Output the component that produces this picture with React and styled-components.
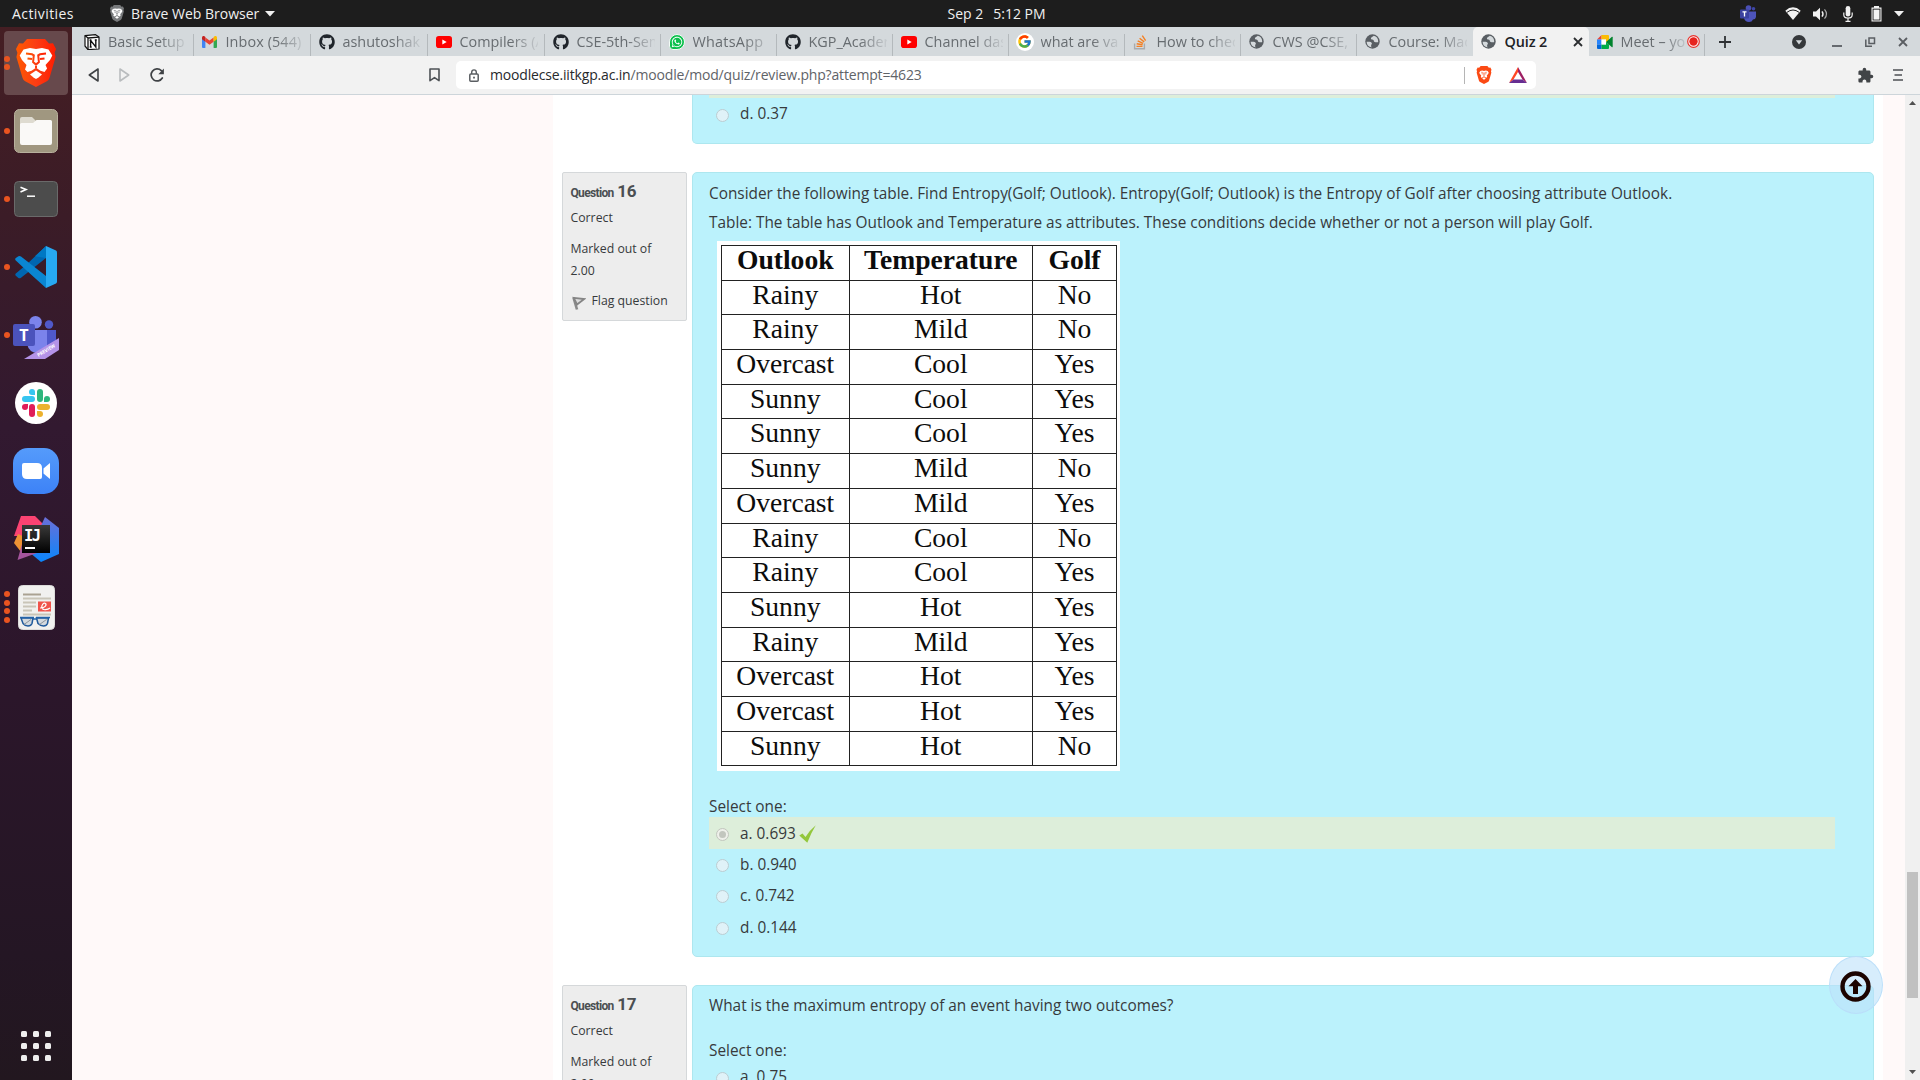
import React from 'react';
import styled, { createGlobalStyle, css } from 'styled-components';
import { FaGithub, FaWhatsapp } from 'react-icons/fa';
import { FcGoogle } from 'react-icons/fc';
import { MdExtension } from 'react-icons/md';

const GlobalStyle = createGlobalStyle`
  * { box-sizing: border-box; }
  body { margin: 0; overflow: hidden; font-family: "Open Sans", "Noto Sans", sans-serif; }
  svg { display: block; flex: none; }
`;

/* ---------- shell ---------- */
const Screen = styled.div`
  width: 1920px;
  height: 1080px;
  display: grid;
  grid-template: 27px 1053px / 72px 1848px;
  overflow: hidden;
`;
const TopBar = styled.header`
  grid-column: 1 / 3;
  display: grid;
  grid-template-columns: 1fr auto 1fr;
  align-items: center;
  background: #1d1d1d;
  color: #f0f0f0;
  font-size: 14px;
  line-height: 26px;
  height: 27px;
  padding: 0 16px 0 12px;
`;
const TopLeft = styled.div`
  display: flex;
  align-items: center;
`;
const Activities = styled.span`
  letter-spacing: 0.42px;
  width: 98px;
`;
const AppName = styled.span`
  margin-left: 7px;
  margin-right: 6px;
`;
const Clock = styled.div`
  white-space: pre;
  display: flex;
  gap: 10px;
  padding-left: 77px;
`;
const Tray = styled.div`
  display: flex;
  justify-content: flex-end;
  align-items: center;
`;
const TrayIcon = styled.span`
  width: ${(p) => p.$w}px;
  margin-left: ${(p) => p.$gap}px;
  display: flex;
`;

/* ---------- dock ---------- */
const Dock = styled.nav`
  background: linear-gradient(#451e23 0%, #3b1c27 18%, #321930 38%, #2c162b 60%, #241624 88%, #22171f 100%);
  display: flex;
  flex-direction: column;
  padding: 2px 0 17px;
`;
const DockSlot = styled.div`
  height: 68px;
  display: grid;
  grid-template-columns: 14px 44px 14px;
  align-items: center;
  justify-items: center;
`;
const ActiveSlot = styled(DockSlot)`
  height: 64px;
  margin: 2px 4px;
  grid-template-columns: 6px 52px 6px;
  border-radius: 4px;
  background: #67494c;
`;
const Dots = styled.div`
  display: flex;
  flex-direction: column;
  gap: 2.7px;
`;
const Dot = styled.i`
  width: 6px;
  height: 6px;
  border-radius: 50%;
  background: #e95420;
`;
const AppGrid = styled.div`
  margin: auto 0 0 21px;
  display: grid;
  grid-template-columns: repeat(3, 6px);
  grid-auto-rows: 6px;
  gap: 6px;
  padding-bottom: 2px;
  height: 32px;
`;
const AppSquare = styled.i`
  background: #eee;
  border-radius: 1.5px;
`;

/* ---------- browser chrome ---------- */
const Browser = styled.main`
  display: grid;
  grid-template-rows: 29px 39px 985px;
  overflow: hidden;
`;
const TabStrip = styled.div`
  background: #d4d9dc;
  display: flex;
  padding-left: 5px;
  align-items: stretch;
`;
const Tab = styled.div`
  width: 116px;
  flex: none;
  display: flex;
  align-items: center;
  padding-left: 6.5px;
  position: relative;
  color: #676c70;
  font-size: 14.4px;
  border-radius: 5px 5px 0 0;
  &:nth-child(-n + 4) { width: 117px; }
  &:first-child { padding-left: 6px; }
  ${(p) => p.$active && css`
    background: #f2f2f2;
    color: #202124;
  `}
`;
const TabSeparator = styled.i`
  position: absolute;
  right: 0;
  top: 7px;
  bottom: 0;
  width: 1px;
  background: #b4b9bc;
`;
const Favicon = styled.span`
  width: 18px;
  height: 18px;
  display: flex;
  align-items: center;
  justify-content: center;
`;
const TabTitle = styled.span`
  width: ${(p) => p.$w || 78}px;
  margin-left: 7px;
  overflow: hidden;
  white-space: nowrap;
  line-height: 28px;
  padding-top: 1px;
  letter-spacing: ${(p) => p.$ls || 0}px;
  font-weight: ${(p) => (p.$bold ? 600 : 400)};
  ${(p) => !p.$bold && css`
    mask-image: linear-gradient(90deg, #000 65%, transparent 104%);
  `}
`;
const WindowButtons = styled.div`
  flex: 1;
  display: flex;
  align-items: center;
  justify-content: space-between;
  padding: 0 12.5px 0 14px;
`;
const WindowGroup = styled.div`
  display: flex;
  gap: 15px;
  align-items: center;
`;
const Toolbar = styled.div`
  background: #f2f2f2;
  border-bottom: 1px solid #cdd5da;
  display: flex;
  align-items: center;
  padding: 0 17px 0 16px;
`;
const NavButtons = styled.div`
  display: flex;
  align-items: center;
  gap: 20px;
  width: 341px;
`;
const BookmarkSlot = styled.div`
  width: 27px;
`;
const UrlBar = styled.div`
  width: 1080px;
  height: 28px;
  background: #fff;
  border-radius: 5px;
  display: flex;
  align-items: center;
  padding: 0 9px 0 13px;
`;
const UrlText = styled.span`
  margin-left: 11px;
  flex: 1;
  font-size: 14px;
  letter-spacing: -0.17px;
  line-height: 28px;
  color: #5f6368;
`;
const UrlHost = styled.span`
  color: #27292c;
`;
const UrlDivider = styled.i`
  width: 1px;
  height: 17px;
  background: #b5b5b5;
  margin-right: 11px;
`;
const ShieldSlot = styled.span`
  margin-right: 17px;
`;
const ToolbarEnd = styled.div`
  margin-left: auto;
  display: flex;
  align-items: center;
  gap: 19px;
  color: #414447;
`;

/* ---------- page ---------- */
const Viewport = styled.div`
  display: grid;
  grid-template-columns: 481px 1330px 22px 15px;
  background: #fff9f9;
  height: 985px;
  overflow: hidden;
  position: relative;
`;
const Content = styled.section`
  grid-column: 2;
  background: #fff;
  padding: 0 9px;
  height: 985px;
  overflow: hidden;
  color: #373a3c;
`;
const Question = styled.article`
  display: grid;
  grid-template-columns: 125px 1182px;
  column-gap: 5px;
  align-items: start;
  margin-bottom: 28px;
`;
const Info = styled.aside`
  background: #ededed;
  border: 1px solid #d5d8da;
  border-radius: 2px;
  padding: 5.5px 7.5px 0;
  height: 149px;
  font-size: 12.28px;
  line-height: 22px;
`;
const QuestionNo = styled.h3`
  margin: 0;
  height: 24px;
  font: 700 12px/24px Roboto, sans-serif;
  letter-spacing: -0.65px;
  color: #4b4f52;
  display: flex;
  align-items: baseline;
  gap: 3.5px;
`;
const Num = styled.span`
  font-size: 17px;
  letter-spacing: -0.3px;
`;
const InfoLine = styled.div`
  margin-top: ${(p) => p.$mt}px;
  display: flex;
  align-items: center;
`;
const FlagSlot = styled.span`
  width: 21px;
  padding: 5px 0 0 1px;
`;
const Panel = styled.div`
  grid-column: 2;
  background: #bbf2fc;
  border: 1px solid #ade7ef;
  border-radius: 5px;
  padding: 0 38px 0 16px;
  font-size: 15.37px;
  height: ${(p) => p.$h}px;
  border-top-width: ${(p) => (p.$cut ? 0 : 1)}px;
  border-top-left-radius: ${(p) => (p.$cut ? 0 : 5)}px;
  border-top-right-radius: ${(p) => (p.$cut ? 0 : 5)}px;
`;
const Prompt = styled.p`
  margin: ${(p) => p.$mt}px 0 0;
  line-height: 23px;
  height: 23px;
  white-space: nowrap;
`;
const CutStrip = styled.div`
  height: 3px;
  background: #ddeeda;
`;
const Answers = styled.div`
  display: grid;
  grid-auto-rows: 31.4px;
  margin-top: ${(p) => p.$mt || 0}px;
`;
const Answer = styled.div`
  display: flex;
  align-items: center;
  padding: 0 0 0 7px;
`;
const RightAnswer = styled(Answer)`
  background: #ddeeda;
  height: 32px;
`;
const Radio = styled.span`
  width: 13px;
  height: 13px;
  border-radius: 50%;
  border: 1px solid #bccdd2;
  background: #e0f2f8;
  margin: 3px 11px 0 0;
  display: grid;
  place-items: center;
  ${(p) => p.$on && css`
    background: #eef0ea;
    border-color: #c2c6be;
    &::after {
      content: '';
      width: 7px;
      height: 7px;
      border-radius: 50%;
      background: #c2c6be;
    }
  `}
`;
const AnswerText = styled.span`
  line-height: 24px;
  margin-top: 1.5px;
`;
const TickSlot = styled.span`
  margin: 2px 0 0 3.5px;
`;
const TableFrame = styled.div`
  margin: 7px 0 0 8px;
  width: 403px;
  height: 530px;
  background: #fff;
  padding: 4px 3px 4px 4px;
`;
const DataTable = styled.div`
  display: grid;
  grid-template-columns: 127.5px 183.5px 84px;
  grid-template-rows: repeat(15, 34.7px);
  border-top: 1px solid #222;
  border-left: 1px solid #222;
  width: 396px;
  font-family: "Liberation Serif", "Times New Roman", serif;
  font-size: 27.6px;
  color: #0c0c0c;
`;
const Cell = styled.div`
  border-right: 1px solid #222;
  border-bottom: 1px solid #222;
  text-align: center;
  line-height: 28px;
  font-weight: ${(p) => (p.$head ? 700 : 400)};
`;
const ToTop = styled.div`
  position: absolute;
  left: 1756.5px;
  top: 861px;
  width: 54px;
  height: 58px;
  border-radius: 50%;
  border: 1px solid rgba(185, 222, 250, 0.9);
  background: rgba(188, 225, 250, 0.6);
  display: grid;
  place-items: center;
  padding-top: 2px;
`;
const Scrollbar = styled.div`
  grid-column: 4;
  background: #f0f0f0;
  display: grid;
  grid-template-rows: 777px 126px 1fr;
  justify-items: center;
`;
const Thumb = styled.div`
  width: 11px;
  background: #c1c1c1;
`;
const ArrowSlot = styled.span`
  padding-top: ${(p) => p.$pt}px;
`;

/* ---------- icons ---------- */
const Caret = () => (
  <svg width="10" height="6" viewBox="0 0 10 6"><path d="M0 0h10L5 5.6z" fill="#f0f0f0" /></svg>
);
const Notion = () => (
  <svg width="16" height="16" viewBox="0 0 16 16">
    <path d="M1 1.6 11.6.7 15 3v12L4 15.6 1 12z" fill="#fff" stroke="#111" strokeWidth="1.2" strokeLinejoin="round" />
    <path d="M1 1.6 4 4v11.6M4 4l11-.8" stroke="#111" strokeWidth="1.3" fill="none" />
    <path d="M6.6 13V6.4L11.8 13V6M5.6 6.3h2M10.8 6h2M5.7 13h2" stroke="#111" strokeWidth="1.4" fill="none" />
  </svg>
);
const Gmail = () => (
  <svg width="15" height="12" viewBox="0 0 15 12">
    <path d="M0 2v9a1 1 0 0 0 1 1h2.4V4.5z" fill="#4285f4" />
    <path d="M15 2v9a1 1 0 0 1-1 1h-2.4V4.5z" fill="#34a853" />
    <path d="M3.4 1.4 7.5 4.5l4.1-3.1v4.3L7.5 8.8 3.4 5.7z" fill="#ea4335" />
    <path d="M0 1.7C0 .2 1.6-.4 2.7.5l.7.6v4.6L0 3.2z" fill="#c5221f" />
    <path d="M15 1.7C15 .2 13.4-.4 12.3.5l-.7.6v4.6L15 3.2z" fill="#fbbc04" />
  </svg>
);
const YouTube = () => (
  <svg width="16" height="12" viewBox="0 0 16 12">
    <rect width="16" height="12" rx="2.8" fill="#f00" /><path d="M6.3 3.4v5.2L10.7 6z" fill="#fff" />
  </svg>
);
const WhatsAppIcon = styled.span`
  width: 16px;
  height: 16px;
  border-radius: 50% 50% 50% 25%;
  background: #0bbf4c;
  border: 1px solid #f4fbf6;
  color: #fff;
  display: grid;
  place-items: center;
`;
const GoogleDisc = styled.span`
  width: 18px;
  height: 18px;
  border-radius: 50%;
  background: #fff;
  display: grid;
  place-items: center;
`;
const StackOverflow = () => (
  <svg width="15" height="16" viewBox="0 0 15 16" fill="none">
    <path d="M1.6 9.5v5.2h9.8V9.5" stroke="#a9abad" strokeWidth="1.4" />
    <path d="M3.5 12.4h6M3.7 9.7l5.9 1.1M4.7 6.9l5.4 2.5M6.6 4.2l4.6 3.7M9.3 1.7l3.3 4.9" stroke="#f48024" strokeWidth="1.4" />
  </svg>
);
const Globe = () => (
  <svg width="15" height="15" viewBox="0 0 15 15">
    <circle cx="7.5" cy="7.5" r="7.2" fill="#595e63" />
    <path d="M8.8 1.7C7.7 3.2 5.9 2.8 5.9 4.6c0 1.6 3 .6 3 2.5 0 1.1 1.1 1.3 2.6 1.1 1.2-.2 1.8.1 1.700-.8A5.900 5.900 0 0 0 8.800 1.700zM1.600 7.800c2 .3 4.100-.3 5 .9.900 1.100-.4 1.500-.5 2.700 0 .9.300 1.700.9 2A5.900 5.900 0 0 1 1.600 7.800z" fill="#d4d9dc" />
  </svg>
);
const Meet = () => (
  <svg width="16" height="14" viewBox="0 0 16 14">
    <path d="M0 4.500 4.500 0v4.500z" fill="#ea4335" />
    <path d="M4.500 0H11a1 1 0 0 1 1 1v4.500L9 7V4.500H4.500z" fill="#fbbc04" />
    <path d="M0 4.500h4.500v5H0z" fill="#2684fc" /><path d="M0 9.500h4.500V14H1a1 1 0 0 1-1-1z" fill="#0066da" />
    <path d="M4.500 9.500H9V7l3 2.500V13a1 1 0 0 1-1 1H4.500z" fill="#00ac47" />
    <path d="M4.500 4.500H9v5H4.500z" fill="#fff" /><path d="M9 7l6-5.200c.4-.3.7 0 .7.4v9.600c0 .4-.3.7-.7.4z" fill="#00832d" />
  </svg>
);
const RecordDot = () => (
  <svg width="13" height="13" viewBox="0 0 13 13"><circle cx="6.5" cy="6.5" r="5.8" fill="#fff" stroke="#e8322c" strokeWidth="1.2" /><circle cx="6.5" cy="6.5" r="4.2" fill="#e6241f" /></svg>
);
const Cross = ({ color = '#2b2d30' }) => (
  <svg width="10" height="10" viewBox="0 0 10 10"><path d="M1 1l8 8M9 1L1 9" stroke={color} strokeWidth="1.8" /></svg>
);
const Shield = ({ w, h, body, face = 1 }) => (
  <svg width={w} height={h} viewBox="0 0 40 48">
    <defs><linearGradient id="lion"><stop offset="0" stopColor="#ff5a00" /><stop offset=".5" stopColor="#fb3d14" /><stop offset="1" stopColor="#ff1c00" /></linearGradient></defs>
    <path d="M11 0h18l4 4.500 4-.3 3 5.800-1.400 3.800 1 4.200-6 20.500c-.6 2-1.600 3-3.200 4L20 48l-10.400-5.500c-1.600-1-2.600-2-3.200-4L.4 18l1-4.200L0 10l3-5.800 4 .3z" fill={body} />
    <g transform={`translate(20 24) scale(${face}) translate(-20 -24)`}>
      <path d="M7.500 10.500 14 9l6 1 6-1 6.500 1.500 3.800 6-2.300 4.500-4.500 5 1.600 3.500-2.600 3.500-4-1.300-4.500-3-4.500 3-4 1.300L9 30.500 10.500 26 6 21l-2.300-4.500z" fill="#fff" />
      <path d="M10 14.500l6 .8 1.800 1-.7 6.700 2.900 2.600 2.900-2.600-.7-6.700 1.800-1 6-.8M11.500 19.500l4.500.6M28.500 19.500l-4.500.6M20 25v4" stroke={body} strokeWidth="2" fill="none" />
      <path d="M20 31.500l6 4-3.500 3L20 40l-2.500-1.500-3.500-3z" fill="#fff" />
    </g>
  </svg>
);
const Files = () => (
  <svg width="44" height="44" viewBox="0 0 44 44">
    <rect x=".5" y=".5" width="43" height="43" rx="5" fill="#a09780" stroke="#b8b09d" />
    <path d="M6 13V10q0-2 2-2h10l4 4v4H6z" fill="#dedbd0" />
    <path d="M6 15.500q0-1.500 1.500-1.500H19l3.500-3H36.500Q38 11 38 12.500V34q0 2-2 2H8q-2 0-2-2z" fill="#faf9f7" />
  </svg>
);
const Terminal = () => (
  <svg width="44" height="36" viewBox="0 0 44 36">
    <rect x=".5" y=".5" width="43" height="35" rx="4" fill="#4c4c4c" stroke="#6a6a6a" />
    <path d="M6.500 6.300l5.500 2.200-5.500 2.400" stroke="#fff" strokeWidth="1.6" fill="none" /><path d="M13 15.200h8" stroke="#fff" strokeWidth="1.5" />
  </svg>
);
const VSCode = () => (
  <svg width="42" height="42" viewBox="0 0 42 42">
    <path d="M31 0 11 19 .8 27.500Q-.2 28.700.8 29.700L3.400 32Q4.600 32.800 6 31.700L31 12z" fill="#0066b0" />
    <path d="M31 42 11 24 .8 14.500Q-.4 13 .8 12L3.400 10.300Q4.600 9.500 6 10.400L31 30z" fill="#0a86d2" />
    <path d="M31 0 20 10.300 31 12z" fill="#0078c4" />
    <path d="M31 0 41 4.500Q42 5 42 6.500v29Q42 37 41 37.500L31 42z" fill="#27a9f2" />
  </svg>
);
const IconText = styled.text`
  font-family: ${(p) => p.$font || '"Open Sans"'}, sans-serif;
  font-weight: 700;
  font-size: ${(p) => p.$s}px;
`;
const TeamsSlot = styled.span`
  padding-top: 5px;
`;
const Teams = () => (
  <TeamsSlot>
    <svg width="46" height="43" viewBox="0 0 46 43">
      <circle cx="22.5" cy="6.3" r="6.3" fill="#7b83eb" /><circle cx="36" cy="8.5" r="4.2" fill="#5059c9" />
      <path d="M32 14h11v17q0 4-4 4h-7z" fill="#4f58ca" /><path d="M14 14h20v17q-3 6-9 6-9 0-11-9z" fill="#7b83eb" />
      <rect y="8" width="22" height="22" rx="2" fill="#4b53bc" />
      <IconText x="11" y="25" $s="16" textAnchor="middle" fill="#fff">T</IconText>
      <path d="M11 43 46 22v12L32 43z" fill="#b493e8" />
      <IconText x="25.5" y="41" $s="5" fill="#fff" textLength="20" lengthAdjust="spacingAndGlyphs" transform="rotate(-31 25.5 41)">PREVIEW</IconText>
    </svg>
  </TeamsSlot>
);
const Slack = () => (
  <svg width="42" height="42" viewBox="0 0 42 42">
    <circle cx="21" cy="21" r="21" fill="#fff" />
    <g fill="#36c5f0"><rect x="7" y="14" width="13" height="6" rx="3" /><path d="M20 13h-3a3 3 0 1 1 3-3z" /></g>
    <g fill="#2eb67d"><rect x="22" y="7" width="6" height="13" rx="3" /><path d="M29 20v-3a3 3 0 1 1 3 3z" /></g>
    <g fill="#ecb22e"><rect x="22" y="22" width="13" height="6" rx="3" /><path d="M22 29h3a3 3 0 1 1-3 3z" /></g>
    <g fill="#e01e5a"><rect x="14" y="22" width="6" height="13" rx="3" /><path d="M13 22v3a3 3 0 1 1-3-3z" /></g>
  </svg>
);
const Zoom = () => (
  <svg width="46" height="46" viewBox="0 0 46 46">
    <defs><linearGradient id="zm" x2="0" y2="1"><stop stopColor="#559bfb" /><stop offset="1" stopColor="#3d82f7" /></linearGradient></defs>
    <rect width="46" height="46" rx="15" fill="url(#zm)" />
    <path d="M9 17q0-2 2-2h13q5 0 5 5v9q0 2-2 2H14q-5 0-5-5z" fill="#fff" /><path d="M30.500 20.500 37 15v16l-6.500-5.500z" fill="#fff" />
  </svg>
);
const IntelliJ = () => (
  <svg width="46" height="46" viewBox="0 0 46 46">
    <defs>
      <linearGradient id="ijb" x2="0" y2="1"><stop stopColor="#6b6fd8" /><stop offset="1" stopColor="#0a86fb" /></linearGradient>
      <linearGradient id="ijk" x2="0" y2="1"><stop stopColor="#3a3a3a" /><stop offset="1" stopColor="#000" /></linearGradient>
    </defs>
    <path d="M8 0h14l8 8-8 12H1z" fill="#fb4372" /><path d="M32 1 46 12v26L28 46 16 36z" fill="url(#ijb)" />
    <path d="M5 18 1 27l7 9 6-14z" fill="#ee9234" /><path d="M9 28 4.500 44 24 37z" fill="#a4549c" />
    <rect x="9" y="9" width="28" height="28" fill="url(#ijk)" />
    <IconText x="11" y="25" $s="15.5" $font='"DejaVu Sans Mono"' textLength="17" fill="#fff">IJ</IconText>
    <rect x="12" y="31" width="10" height="2" fill="#fff" />
  </svg>
);
const Evince = () => (
  <svg width="37" height="45" viewBox="0 0 37 45">
    <rect x=".5" y=".5" width="36" height="44" rx="4" fill="#f1f1ef" stroke="#dcdcda" />
    <path d="M5 9.500h18" stroke="#aaa292" strokeWidth="2" />
    <path d="M5 13.500h28M5 17.500h13M5 21.500h13M5 25.500h9M5 29.500h28" stroke="#c9c5b8" strokeWidth="2" />
    <rect x="20" y="16.5" width="13" height="10" fill="#f0544c" />
    <path d="M22 23c5 0 7-3 5.500-4.500S23 20 24 23s6 1.500 8 0" stroke="#fff" strokeWidth="1.2" fill="none" />
    <g fill="#d3d9de" stroke="#1f5a9c" strokeWidth="1.5"><path d="M3 33h12L14 38.500q-1 2.500-4 2.500T5 38.500zM18.500 33h12L29.500 38.500q-1 2.500-4 2.500T20 38.500z" /></g>
    <path d="M2 32.500h14M18 32.500h14M15 34h4" stroke="#2463a8" strokeWidth="1.6" />
    <path d="M6 39.500l7-5M21.500 39.500l7-5" stroke="#8a949c" strokeWidth="1" />
  </svg>
);
const TeamsTray = () => (
  <svg width="17" height="17" viewBox="0 0 17 17">
    <circle cx="8.5" cy="3" r="2.8" fill="#4a4fb5" /><circle cx="13.5" cy="3.7" r="1.8" fill="#3f46a8" />
    <path d="M7 6.500h9V12q-.5 2.500-3 2.500Q12 17 9 17q-4 0-5-4z" fill="#4d54bb" />
    <rect y="4.5" width="9" height="9" rx="1" fill="#3b429f" /><path d="M2.500 6.900h4M4.500 7v4.500" stroke="#fff" strokeWidth="1.3" />
  </svg>
);
const Wifi = () => (
  <svg width="16" height="13" viewBox="0 0 16 13"><path d="M.3 3.700Q8-3 15.700 3.700L8 13z" fill="#f2f2f2" /><path d="M2 5.300q6-4.600 12 0" stroke="#1d1d1d" strokeWidth="1" fill="none" /></svg>
);
const Volume = () => (
  <svg width="16" height="14" viewBox="0 0 16 14"><path d="M0 4.500h3L7 .8v12.400L3 9.500H0z" fill="#f2f2f2" /><path d="M9 4.300q2 2.700 0 5.400" stroke="#f2f2f2" strokeWidth="1.4" fill="none" /><path d="M11.500 2.300q4 4.700 0 9.400" stroke="#a9a9a9" strokeWidth="1.2" fill="none" /></svg>
);
const Mic = () => (
  <svg width="10" height="16" viewBox="0 0 10 16"><rect x="2.7" width="4.6" height="10.5" rx="2.3" fill="#f2f2f2" /><path d="M.8 6.500v2.200Q.8 12 5 12t4.200-3.300V6.500M5 12v3.300M2.500 15.300h5" stroke="#f2f2f2" strokeWidth="1.2" fill="none" /></svg>
);
const Battery = () => (
  <svg width="11" height="16" viewBox="0 0 11 16"><path d="M3 0h5v1.500h2.500V15.500H.5V1.500H3z" fill="#f2f2f2" /><rect x="1.6" y="2.7" width="7.8" height="11.7" fill="#1d1d1d" /><rect x="2.5" y="3.6" width="6" height="10" fill="#f2f2f2" /></svg>
);
const Triangle = ({ dir, color }) => (
  <svg width="11" height="14" viewBox="0 0 11 14">
    <path d={dir === 'left' ? 'M10 1v12L1.300 7z' : 'M1 1v12l8.700-6z'} fill="none" stroke={color} strokeWidth="1.6" strokeLinejoin="round" />
  </svg>
);
const Reload = () => (
  <svg width="15" height="14" viewBox="0 0 15 14"><path d="M12.300 10A6 6 0 1 1 11.300 2.600" fill="none" stroke="#3f4245" strokeWidth="1.7" strokeLinecap="round" /><path d="M13.900.5v5.700H8.300z" fill="#3f4245" /></svg>
);
const Bookmark = () => (
  <svg width="11" height="14" viewBox="0 0 11 14"><path d="M1 1h9v11.700L5.500 9.600 1 12.700z" fill="none" stroke="#4d5155" strokeWidth="1.6" strokeLinejoin="round" /></svg>
);
const Lock = () => (
  <svg width="10" height="13" viewBox="0 0 10 13"><rect x=".8" y="5" width="8.4" height="7.2" rx="1" fill="none" stroke="#5a5e62" strokeWidth="1.5" /><path d="M2.700 5V3.200a2.300 2.300 0 0 1 4.600 0V5" fill="none" stroke="#5a5e62" strokeWidth="1.4" /><rect x="4.1" y="7.7" width="1.8" height="1.8" fill="#5a5e62" /></svg>
);
const Bat = () => (
  <svg width="18" height="16" viewBox="0 0 18 16"><path d="M9 0v5L4.500 12.600 0 16z" fill="#ff4724" /><path d="M9 0l9 16-4.500-3.400L9 5z" fill="#9e1f63" /><path d="M0 16l4.500-3.400h9L18 16z" fill="#662d91" /></svg>
);
const Menu = () => (
  <svg width="10" height="12" viewBox="0 0 10 12"><path d="M0 1h10M1.500 6H9M0 11h10" stroke="#4d5054" strokeWidth="1.7" /></svg>
);
const Flag = () => (
  <svg width="14" height="14" viewBox="0 0 14 14"><path d="M1.500 1.500 5 13.500" stroke="#8a8a8a" strokeWidth="2.6" /><path d="M1.800 1.800 12.300 3 5 8.500z" fill="#ddd" stroke="#858585" strokeWidth="1.8" /></svg>
);
const Tick = () => (
  <svg width="18" height="18" viewBox="0 0 18 18"><path d="M.3 10.500 3.500 8.500 6.500 12Q11 5 16.800.3 12 8 8.300 17.700z" fill="#93c73c" /></svg>
);
const UpArrow = () => (
  <svg width="31" height="31" viewBox="0 0 31 31"><circle cx="15.5" cy="15.5" r="13" fill="none" stroke="#1c0400" strokeWidth="4.4" /><path d="M15.500 8 22.500 15.300H18V23H13V15.300H8.500z" fill="#1c0400" /></svg>
);

const tabs = [
  [<Notion />, 'Basic Setup', -0.05],
  [<Gmail />, 'Inbox (544)', 0.1],
  [<FaGithub size={16} color="#20252b" />, 'ashutoshak'],
  [<YouTube />, 'Compilers (A'],
  [<FaGithub size={16} color="#20252b" />, 'CSE-5th-Sem'],
  [<WhatsAppIcon><FaWhatsapp size={12} /></WhatsAppIcon>, 'WhatsApp', 0.25],
  [<FaGithub size={16} color="#20252b" />, 'KGP_Acader'],
  [<YouTube />, 'Channel das'],
  [<GoogleDisc><FcGoogle size={15} /></GoogleDisc>, 'what are va'],
  [<StackOverflow />, 'How to chec'],
  [<Globe />, 'CWS @CSE,'],
  [<Globe />, 'Course: Mac'],
];
const dock = [
  [1, Files], [1, Terminal], [1, VSCode], [1, Teams], [0, Slack], [0, Zoom], [0, IntelliJ], [4, Evince],
];
const rows = [
  ['Rainy', 'Hot', 'No'], ['Rainy', 'Mild', 'No'], ['Overcast', 'Cool', 'Yes'], ['Sunny', 'Cool', 'Yes'],
  ['Sunny', 'Cool', 'Yes'], ['Sunny', 'Mild', 'No'], ['Overcast', 'Mild', 'Yes'], ['Rainy', 'Cool', 'No'],
  ['Rainy', 'Cool', 'Yes'], ['Sunny', 'Hot', 'Yes'], ['Rainy', 'Mild', 'Yes'], ['Overcast', 'Hot', 'Yes'],
  ['Overcast', 'Hot', 'Yes'], ['Sunny', 'Hot', 'No'],
];

const DotColumn = ({ n }) => <Dots>{Array.from({ length: n }, (_, i) => <Dot key={i} />)}</Dots>;

const QuestionInfo = ({ n }) => (
  <Info>
    <QuestionNo>Question <Num>{n}</Num></QuestionNo>
    <InfoLine $mt={4}>Correct</InfoLine>
    <InfoLine $mt={9}>Marked out of</InfoLine>
    <InfoLine $mt={0}>2.00</InfoLine>
    <InfoLine $mt={8}><FlagSlot><Flag /></FlagSlot>Flag question</InfoLine>
  </Info>
);

export default function App() {
  return (
    <Screen>
      <GlobalStyle />
      <TopBar>
        <TopLeft>
          <Activities>Activities</Activities>
          <Shield w={14} h={17} body="#77797b" face={0.95} />
          <AppName>Brave Web Browser</AppName>
          <Caret />
        </TopLeft>
        <Clock><span>Sep 2</span><span>5:12 PM</span></Clock>
        <Tray>
          <TrayIcon $w={17} $gap={0}><TeamsTray /></TrayIcon>
          <TrayIcon $w={16} $gap={28}><Wifi /></TrayIcon>
          <TrayIcon $w={16} $gap={12}><Volume /></TrayIcon>
          <TrayIcon $w={10} $gap={14}><Mic /></TrayIcon>
          <TrayIcon $w={11} $gap={18}><Battery /></TrayIcon>
          <TrayIcon $w={10} $gap={12}><Caret /></TrayIcon>
        </Tray>
      </TopBar>

      <Dock>
        <ActiveSlot><DotColumn n={2} /><Shield w={40} h={48} body="url(#lion)" /></ActiveSlot>
        {dock.map(([n, Icon], i) => (
          <DockSlot key={i}><DotColumn n={n} /><Icon /></DockSlot>
        ))}
        <AppGrid>{Array.from({ length: 9 }, (_, i) => <AppSquare key={i} />)}</AppGrid>
      </Dock>

      <Browser>
        <TabStrip>
          {tabs.map(([icon, title, ls], i) => (
            <Tab key={i}>
              <Favicon>{icon}</Favicon>
              <TabTitle $ls={ls}>{title}</TabTitle>
              {i < 11 && <TabSeparator />}
            </Tab>
          ))}
          <Tab $active>
            <Favicon><Globe /></Favicon>
            <TabTitle $bold $w={68} $ls={-0.1}>Quiz 2</TabTitle>
            <Cross />
          </Tab>
          <Tab>
            <Favicon><Meet /></Favicon>
            <TabTitle $w={66}>Meet – yo</TabTitle>
            <RecordDot />
            <TabSeparator />
          </Tab>
          <WindowButtons>
            <svg width="12" height="12" viewBox="0 0 12 12"><path d="M6 0v12M0 6h12" stroke="#2f3235" strokeWidth="1.8" /></svg>
            <WindowGroup>
              <svg width="25" height="14" viewBox="0 0 25 14"><circle cx="7" cy="7" r="7" fill="#35383b" /><path d="M3.800 5.200h6.400L7 9.500z" fill="#d4d9dc" /></svg>
              <svg width="18" height="14" viewBox="0 0 18 14"><path d="M0 11h10" stroke="#5a5e62" strokeWidth="1.8" /></svg>
              <svg width="18" height="10" viewBox="0 0 18 10"><path d="M4 1h5.500v5.500H4z" fill="none" stroke="#5a5e62" strokeWidth="1.5" /><path d="M.8 2.500V9.200H7" fill="none" stroke="#5a5e62" strokeWidth="1.5" /></svg>
              <Cross color="#5a5e62" />
            </WindowGroup>
          </WindowButtons>
        </TabStrip>

        <Toolbar>
          <NavButtons>
            <Triangle dir="left" color="#3f4245" />
            <Triangle dir="right" color="#b9bcbe" />
            <Reload />
          </NavButtons>
          <BookmarkSlot><Bookmark /></BookmarkSlot>
          <UrlBar>
            <Lock />
            <UrlText><UrlHost>moodlecse.iitkgp.ac.in</UrlHost>/moodle/mod/quiz/review.php?attempt=4623</UrlText>
            <UrlDivider />
            <ShieldSlot><Shield w={16} h={18} body="#fb4a14" face={0.78} /></ShieldSlot>
            <Bat />
          </UrlBar>
          <ToolbarEnd><MdExtension size={17} /><Menu /></ToolbarEnd>
        </Toolbar>

        <Viewport>
          <Content>
            <Question>
              <Panel $h={49} $cut>
                <CutStrip />
                <Answers><Answer><Radio /><AnswerText>d. 0.37</AnswerText></Answer></Answers>
              </Panel>
            </Question>
            <Question>
              <QuestionInfo n="16" />
              <Panel $h={785}>
                <Prompt $mt={9}>Consider the following table. Find Entropy(Golf; Outlook). Entropy(Golf; Outlook) is the Entropy of Golf after choosing attribute Outlook.</Prompt>
                <Prompt $mt={6}>Table: The table has Outlook and Temperature as attributes. These conditions decide whether or not a person will play Golf.</Prompt>
                <TableFrame>
                  <DataTable>
                    {['Outlook', 'Temperature', 'Golf'].map((t) => <Cell $head key={t}>{t}</Cell>)}
                    {rows.flat().map((t, i) => <Cell key={i}>{t}</Cell>)}
                  </DataTable>
                </TableFrame>
                <Prompt $mt={24}>Select one:</Prompt>
                <Answers $mt={-1}>
                  <RightAnswer><Radio $on /><AnswerText>a. 0.693</AnswerText><TickSlot><Tick /></TickSlot></RightAnswer>
                  <Answer><Radio /><AnswerText>b. 0.940</AnswerText></Answer>
                  <Answer><Radio /><AnswerText>c. 0.742</AnswerText></Answer>
                  <Answer><Radio /><AnswerText>d. 0.144</AnswerText></Answer>
                </Answers>
              </Panel>
            </Question>
            <Question>
              <QuestionInfo n="17" />
              <Panel $h={400}>
                <Prompt $mt={8}>What is the maximum entropy of an event having two outcomes?</Prompt>
                <Prompt $mt={22}>Select one:</Prompt>
                <Answers $mt={-1}><Answer><Radio /><AnswerText>a. 0.75</AnswerText></Answer></Answers>
              </Panel>
            </Question>
          </Content>
          <Scrollbar>
            <ArrowSlot $pt={6}><svg width="7" height="4" viewBox="0 0 7 4"><path d="M0 4h7L3.500 0z" fill="#505050" /></svg></ArrowSlot>
            <Thumb />
            <ArrowSlot $pt={72}><svg width="7" height="4" viewBox="0 0 7 4"><path d="M0 0h7L3.500 4z" fill="#505050" /></svg></ArrowSlot>
          </Scrollbar>
          <ToTop><UpArrow /></ToTop>
        </Viewport>
      </Browser>
    </Screen>
  );
}
